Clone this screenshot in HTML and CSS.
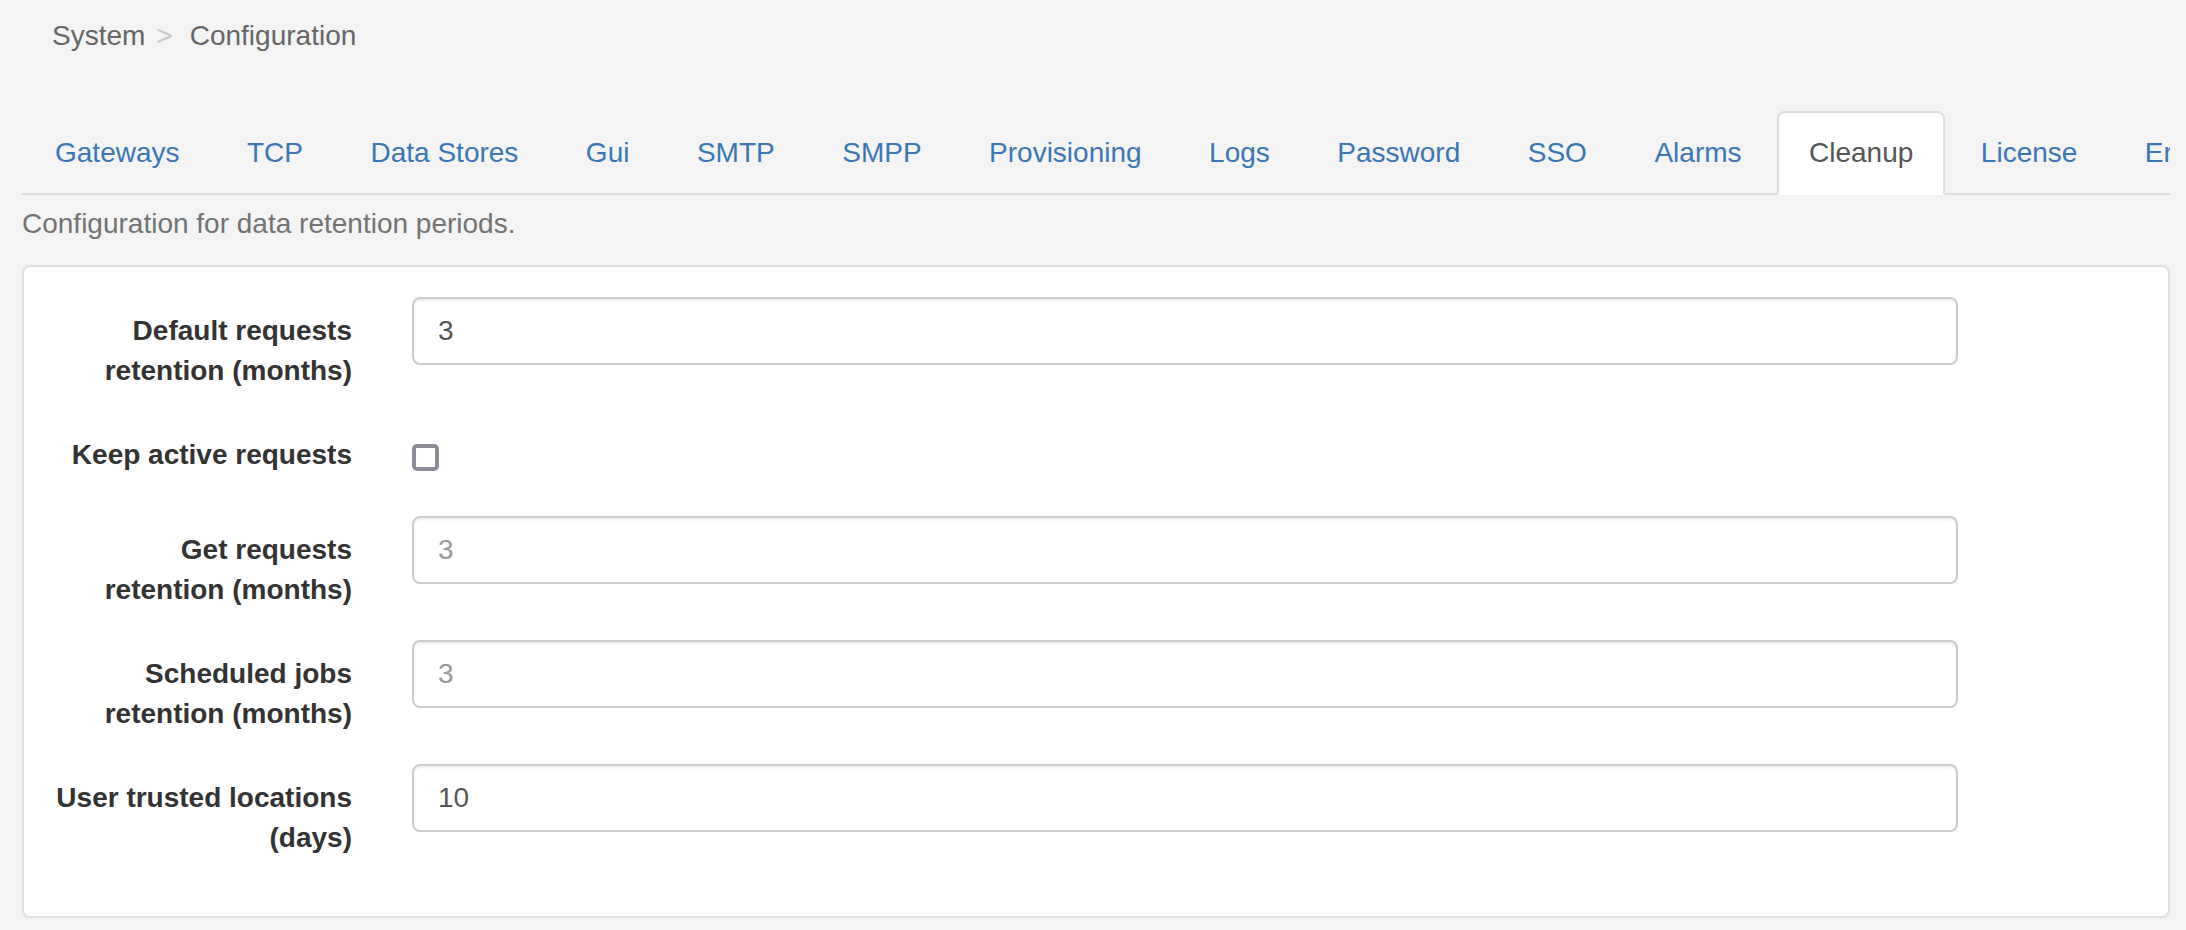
FILE: index.html
```html
<!DOCTYPE html>
<html lang="en">
<head>
<meta charset="utf-8">
<title>System Configuration - Cleanup</title>
<link rel="stylesheet" href="styles.css">
</head>
<body>
<div class="page">
  <ol class="breadcrumb">
    <li>System</li>
    <li class="sep">&gt;</li>
    <li>Configuration</li>
  </ol>

  <div class="tabs-clip">
    <ul class="tabs">
      <li><a>Gateways</a></li>
      <li><a>TCP</a></li>
      <li><a>Data Stores</a></li>
      <li><a>Gui</a></li>
      <li><a>SMTP</a></li>
      <li><a>SMPP</a></li>
      <li><a>Provisioning</a></li>
      <li><a>Logs</a></li>
      <li><a>Password</a></li>
      <li><a>SSO</a></li>
      <li><a>Alarms</a></li>
      <li class="active"><a>Cleanup</a></li>
      <li><a>License</a></li>
      <li><a>Errors</a></li>
    </ul>
  </div>

  <p class="subtitle">Configuration for data retention periods.</p>

  <div class="panel">
    <form class="form">
      <div class="group">
        <label class="label">Default requests<br>retention (months)</label>
        <div class="field"><input class="input" type="text" value="3"></div>
      </div>
      <div class="group group-check">
        <label class="label">Keep active requests</label>
        <div class="field"><span class="checkbox"></span></div>
      </div>
      <div class="group">
        <label class="label">Get requests<br>retention (months)</label>
        <div class="field"><input class="input" type="text" placeholder="3"></div>
      </div>
      <div class="group">
        <label class="label">Scheduled jobs<br>retention (months)</label>
        <div class="field"><input class="input" type="text" placeholder="3"></div>
      </div>
      <div class="group">
        <label class="label">User trusted locations<br>(days)</label>
        <div class="field"><input class="input" type="text" value="10"></div>
      </div>
    </form>
  </div>
</div>
</body>
</html>
```

FILE: styles.css
```css
* { box-sizing: border-box; }

html, body {
  margin: 0;
  padding: 0;
  background: #f4f4f4;
}

body {
  font-family: "Liberation Sans", Arial, Helvetica, sans-serif;
  font-size: 28px;
  line-height: 40px;
  color: #333;
}

.page {
  margin-left: 22px;
  width: 2148px;
}

/* Breadcrumb */
.breadcrumb {
  list-style: none;
  margin: 0 0 39px 0;
  padding: 16px 30px;
  display: flex;
  color: #666;
}
.breadcrumb li { margin: 0; }
.breadcrumb .sep {
  color: #c8c8c8;
  margin: 0 17px 0 11px;
}

/* Tabs */
.tabs-clip {
  overflow: hidden;
  width: 2148px;
}
.tabs {
  list-style: none;
  margin: 0;
  padding: 0 0 0 1px;
  display: flex;
  white-space: nowrap;
  border-bottom: 2px solid #dddddd;
}
.tabs li {
  flex: none;
  margin: 0 3.5px -2px 0;
}
.tabs a {
  display: block;
  padding: 20px 30px;
  border: 2px solid transparent;
  border-radius: 8px 8px 0 0;
  color: #3a77b4;
  line-height: 40px;
}
.tabs .active a {
  background: #fff;
  color: #555;
  border-color: #dddddd;
  border-bottom-color: transparent;
}

/* Subtitle */
.subtitle {
  margin: 9px 0 21px 0;
  color: #737373;
}

/* Panel */
.panel {
  background: #fff;
  border: 2px solid #e0e0e0;
  border-radius: 8px;
  box-shadow: 0 2px 2px rgba(0, 0, 0, 0.04);
  padding: 30px 30px 28px 30px;
}

.form {
  margin: 0;
}

.group {
  display: flex;
  align-items: flex-start;
  margin-bottom: 30px;
}
.group-check {
  min-height: 65px;
}

.label {
  flex: none;
  width: 328px;
  padding: 14px 30px 0 0;
  text-align: right;
  font-weight: bold;
  color: #333;
  line-height: 40px;
}

.field {
  flex: none;
  margin-left: 30px;
  width: 1546px;
}

.input {
  display: block;
  width: 1546px;
  height: 68px;
  padding: 12px 24px;
  font-family: "Liberation Sans", Arial, Helvetica, sans-serif;
  font-size: 28px;
  line-height: 40px;
  color: #555;
  background: #fff;
  border: 2px solid #cccccc;
  border-radius: 8px;
  box-shadow: inset 0 2px 2px rgba(0, 0, 0, 0.075);
  outline: none;
}
.input::placeholder {
  color: #999;
}

.checkbox {
  display: block;
  width: 27px;
  height: 27px;
  margin-top: 23px;
  border: 4px solid #8c8c98;
  border-radius: 5px;
  background: #fff;
}
```
